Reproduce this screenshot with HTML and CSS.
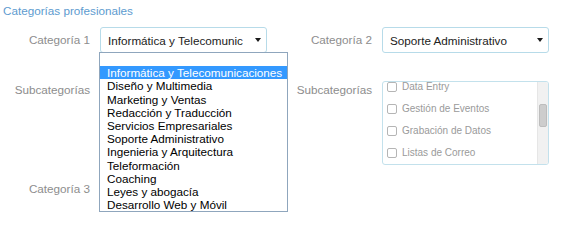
FILE: index.html
```html
<!DOCTYPE html>
<html lang="es">
<head>
<meta charset="utf-8">
<title>Categorías profesionales</title>
<link rel="stylesheet" href="styles.css">
</head>
<body>
<div class="page">
  <div class="title">Categorías profesionales</div>

  <div class="row row-cat">
    <label class="lbl">Categoría 1</label>
    <div class="field">
      <div class="select">
        <span class="val">Informática y Telecomunicaciones</span>
        <span class="arrow"></span>
      </div>
      <ul class="dropdown">
        <li class="opt">&nbsp;</li>
        <li class="opt sel">Informática y Telecomunicaciones</li>
        <li class="opt">Diseño y Multimedia</li>
        <li class="opt">Marketing y Ventas</li>
        <li class="opt">Redacción y Traducción</li>
        <li class="opt">Servicios Empresariales</li>
        <li class="opt">Soporte Administrativo</li>
        <li class="opt">Ingenieria y Arquitectura</li>
        <li class="opt">Teleformación</li>
        <li class="opt">Coaching</li>
        <li class="opt">Leyes y abogacía</li>
        <li class="opt">Desarrollo Web y Móvil</li>
      </ul>
    </div>
    <label class="lbl">Categoría 2</label>
    <div class="field">
      <div class="select">
        <span class="val">Soporte Administrativo</span>
        <span class="arrow"></span>
      </div>
    </div>
  </div>

  <div class="row row-sub">
    <label class="lbl lbl-top">Subcategorías</label>
    <div class="field">
      <div class="checks">
        <div class="check-list"></div>
        <div class="scrollbar"><div class="thumb"></div></div>
      </div>
    </div>
    <label class="lbl lbl-top">Subcategorías</label>
    <div class="field">
      <div class="checks">
        <div class="check-list">
          <div class="item"><span class="box"></span><span>Data Entry</span></div>
          <div class="item"><span class="box"></span><span>Gestión de Eventos</span></div>
          <div class="item"><span class="box"></span><span>Grabación de Datos</span></div>
          <div class="item"><span class="box"></span><span>Listas de Correo</span></div>
        </div>
        <div class="scrollbar"><div class="thumb"></div></div>
      </div>
    </div>
  </div>

  <div class="row row-cat row-3">
    <label class="lbl">Categoría 3</label>
    <div class="field">
      <div class="select">
        <span class="val"></span>
        <span class="arrow"></span>
      </div>
    </div>
  </div>
</div>
</body>
</html>
```

FILE: styles.css
```css
html, body {
  margin: 0;
  padding: 0;
  background: #ffffff;
}

body {
  font-family: "Liberation Sans", Arial, sans-serif;
  font-size: 11.7px;
  min-height: 245px;
}

.page {
  padding: 3px 0 0 0;
  min-height: 242px;
}

.title {
  color: #5d9bcf;
  line-height: 16px;
  padding-left: 3px;
}

.row {
  display: grid;
  grid-template-columns: 90px 167px 95px 167px;
  column-gap: 10px;
}

.row-cat {
  margin-top: 8px;
}

.row-sub {
  margin-top: 28px;
}

.row-3 {
  margin-top: 11px;
}

.lbl {
  color: #8d8d8d;
  text-align: right;
  line-height: 26px;
  white-space: nowrap;
}

.lbl-top {
  line-height: 18px;
}

.field {
  position: relative;
}

.select {
  height: 26px;
  box-sizing: border-box;
  border: 1px solid #b7dbe9;
  border-radius: 3px;
  background: #fff;
  display: flex;
  align-items: center;
  padding: 0 5px 0 7px;
}

.val {
  width: 135px;
  overflow: hidden;
  white-space: nowrap;
  color: #222;
}

.arrow {
  margin-left: 12px;
  width: 0;
  height: 0;
  border-left: 3px solid transparent;
  border-right: 3px solid transparent;
  border-top: 4px solid #1a1a1a;
}

.dropdown {
  position: absolute;
  z-index: 10;
  top: 25px;
  left: -1px;
  width: 189px;
  box-sizing: border-box;
  margin: 0;
  padding: 0;
  list-style: none;
  background: #fff;
  border: 1px solid #8fa6bd;
}

.opt {
  line-height: 13.2px;
  height: 13.2px;
  padding-left: 7px;
  color: #000;
  white-space: nowrap;
}

.opt.sel {
  background: #3399ff;
  color: #fff;
}

.checks {
  height: 84px;
  box-sizing: border-box;
  border: 1px solid #c3e1ec;
  border-radius: 3px;
  background: #fff;
  display: flex;
  overflow: hidden;
}

.check-list {
  flex: 1;
  overflow: hidden;
  padding-left: 4px;
}

.item {
  height: 22px;
  display: flex;
  align-items: center;
  gap: 5px;
  font-size: 10px;
  color: #9a9a9a;
}

.item:first-child {
  margin-top: -6.5px;
}

.box {
  width: 10px;
  height: 10px;
  box-sizing: border-box;
  border: 1px solid #b5b5b5;
  border-radius: 2px;
  background: #fff;
  flex: none;
}

.scrollbar {
  width: 11px;
  flex: none;
  background: #f1f1f1;
  border-left: 1px solid #e6e6e6;
  box-sizing: border-box;
  padding: 22px 1px 0 1px;
}

.thumb {
  height: 23px;
  background: #cdcdcd;
  border: 1px solid #bdbdbd;
  box-sizing: border-box;
  border-radius: 2px;
}
```
